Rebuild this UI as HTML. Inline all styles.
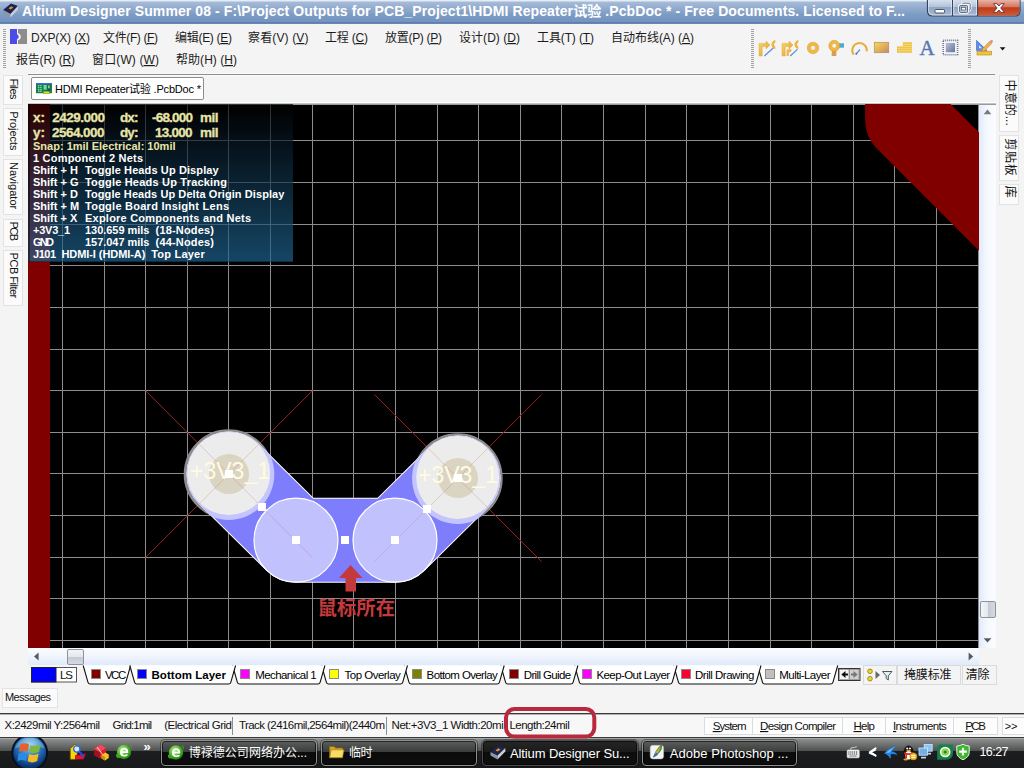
<!DOCTYPE html>
<html><head><meta charset="utf-8"><title>Altium Designer Summer 08</title>
<style>
*{box-sizing:border-box;margin:0;padding:0}
html,body{width:1024px;height:768px;overflow:hidden;background:#f4f4f4}
body{font-family:"Liberation Sans","Noto Sans CJK SC",sans-serif;font-size:11px;color:#1a1a1a;position:relative}
.abs{position:absolute}
#title{left:0;top:0;width:1024px;height:24px;background:linear-gradient(#e4ecf6 0,#e4ecf6 1px,#a6bbd8 2px,#8fa9cd 9px,#7b9ac4 15px,#7494c0 22px,#46689f 23px,#8aa3c8 24px)}
#canvas{left:28px;top:104px;width:951px;height:544px;background:#000;overflow:hidden}
#hud{left:0;top:0;width:265px;height:158px;box-shadow:inset 2px 0 0 rgba(0,0,0,.4),inset 0 -1px 0 rgba(0,0,0,.35);background:linear-gradient(rgba(0,0,0,.66),rgba(14,46,68,.67) 45%,rgba(32,103,150,.68))}
.ptab{background:#fbfbfb;border:1px solid #e3e3e3}
#labels{left:0;top:0;pointer-events:none}
#labels text{font-family:"Liberation Sans","Noto Sans CJK SC",sans-serif;white-space:pre}
.sb{background:#fdfdfd;border:1px solid #dcdcdc;top:717px;height:18px}
</style></head><body>
<div id="title" class="abs"></div>
<div class="abs" style="left:28px;top:73px;width:967px;height:3px;background:#fafafa"></div><div class="abs" style="left:28px;top:74px;width:967px;height:1px;background:#8e8e8e"></div>
<div class="abs" style="left:28px;top:102px;width:968px;height:1px;background:#fff"></div><div class="abs" style="left:28px;top:103px;width:968px;height:1px;background:#c4c4c4"></div>

<!-- left panel tabs -->
<div class="abs ptab" style="left:3px;top:75px;width:20px;height:30px"></div>
<div class="abs ptab" style="left:3px;top:108px;width:20px;height:48px"></div>
<div class="abs ptab" style="left:3px;top:159px;width:20px;height:56px"></div>
<div class="abs ptab" style="left:3px;top:219px;width:20px;height:28px"></div>
<div class="abs ptab" style="left:3px;top:250px;width:20px;height:56px"></div>
<!-- right panel tabs -->
<div class="abs ptab" style="left:999px;top:75px;width:20px;height:57px"></div>
<div class="abs ptab" style="left:999px;top:135px;width:20px;height:46px"></div>
<div class="abs ptab" style="left:999px;top:184px;width:20px;height:21px"></div>

<!-- document tab -->
<div class="abs" style="left:31px;top:77px;width:173px;height:23px;background:#fff;border:1px solid #8c8c8c;border-radius:2px"></div>

<div id="canvas" class="abs">
<svg width="951" height="544" viewBox="28 104 951 544" style="position:absolute;left:0;top:0" shape-rendering="crispEdges">
<g fill="#908b8f"><rect x="62" y="104" width="1" height="544"/><rect x="104" y="104" width="1" height="544"/><rect x="145" y="104" width="1" height="544"/><rect x="187" y="104" width="1" height="544"/><rect x="228" y="104" width="1" height="544"/><rect x="270" y="104" width="1" height="544"/><rect x="312" y="104" width="1" height="544"/><rect x="353" y="104" width="1" height="544"/><rect x="395" y="104" width="1" height="544"/><rect x="437" y="104" width="1" height="544"/><rect x="478" y="104" width="1" height="544"/><rect x="520" y="104" width="1" height="544"/><rect x="561" y="104" width="1" height="544"/><rect x="603" y="104" width="1" height="544"/><rect x="645" y="104" width="1" height="544"/><rect x="686" y="104" width="1" height="544"/><rect x="728" y="104" width="1" height="544"/><rect x="770" y="104" width="1" height="544"/><rect x="811" y="104" width="1" height="544"/><rect x="853" y="104" width="1" height="544"/><rect x="894" y="104" width="1" height="544"/><rect x="936" y="104" width="1" height="544"/><rect x="978" y="104" width="1" height="544"/><rect x="50" y="140" width="929" height="1"/><rect x="50" y="182" width="929" height="1"/><rect x="50" y="224" width="929" height="1"/><rect x="50" y="265" width="929" height="1"/><rect x="50" y="307" width="929" height="1"/><rect x="50" y="349" width="929" height="1"/><rect x="50" y="390" width="929" height="1"/><rect x="50" y="432" width="929" height="1"/><rect x="50" y="473" width="929" height="1"/><rect x="50" y="515" width="929" height="1"/><rect x="50" y="557" width="929" height="1"/><rect x="50" y="598" width="929" height="1"/><rect x="50" y="640" width="929" height="1"/></g>
<rect x="50" y="104" width="929" height="1" fill="#9a9a9a"/>
<rect x="28" y="104" width="22" height="544" fill="#800000"/>

<g shape-rendering="geometricPrecision">
<path d="M906.9 40V119.5L1106.9 319.5" stroke="#800000" stroke-width="83.7" stroke-linejoin="round" fill="none"/>
<path d="M145.5 390.6L312.5 557.6M312.5 390.6L145.5 557.6" stroke="#7c0000" stroke-width="1" fill="none" opacity="1"/><path d="M374.5 394.6L541.5 561.6M541.5 394.6L374.5 561.6" stroke="#7c0000" stroke-width="1" fill="none" opacity="1"/>
<circle cx="228.7" cy="474.3" r="43" fill="none" stroke="#8c8c8c" stroke-width="4"/>
<circle cx="457.7" cy="478.3" r="43" fill="none" stroke="#8c8c8c" stroke-width="4"/>
<path d="M229 474.1L296 540.2L395 540.2L458 478.1" stroke="#fff" stroke-width="85.0" stroke-linecap="round" stroke-linejoin="round" fill="none"/>
<path d="M229 474.1L296 540.2L395 540.2L458 478.1" stroke="#7e7efc" stroke-width="83.0" stroke-linecap="round" stroke-linejoin="round" fill="none"/>
<mask id="tm" maskUnits="userSpaceOnUse" x="100" y="380" width="500" height="260"><path d="M229 474.1L296 540.2L395 540.2L458 478.1" stroke="#fff" stroke-width="85.0" stroke-linecap="round" stroke-linejoin="round" fill="none"/></mask>
<g mask="url(#tm)"><circle cx="228.7" cy="474.3" r="45.6" fill="#c4c4ff"/>
<circle cx="457.7" cy="478.3" r="45.6" fill="#c4c4ff"/></g>
<circle cx="296" cy="540.2" r="42" fill="#c1c1fe" stroke="#fff" stroke-width="1.2"/>
<circle cx="395" cy="540.2" r="42" fill="#c1c1fe" stroke="#fff" stroke-width="1.2"/>
<circle cx="228.7" cy="473.40000000000003" r="41.5" fill="#ececec"/>
<circle cx="457.7" cy="477.40000000000003" r="41.5" fill="#ececec"/>
<circle cx="229" cy="474.1" r="20" fill="#dad4c2"/>
<circle cx="458" cy="478.1" r="20" fill="#dad4c2"/>
<path d="M145.5 390.6L312.5 557.6M312.5 390.6L145.5 557.6" stroke="#d07070" stroke-width="1" fill="none" opacity="0.3"/><path d="M374.5 394.6L541.5 561.6M541.5 394.6L374.5 561.6" stroke="#d07070" stroke-width="1" fill="none" opacity="0.3"/>
<text x="190" y="479.3" font-size="23.2" textLength="80" lengthAdjust="spacingAndGlyphs" fill="#fffbe2" style="font-family:'Liberation Sans',sans-serif">+3V3_1</text>
<text x="418" y="483.3" font-size="23.2" textLength="80" lengthAdjust="spacingAndGlyphs" fill="#fffbe2" style="font-family:'Liberation Sans',sans-serif">+3V3_1</text>
<rect x="225" y="470" width="8" height="8" fill="#fff" shape-rendering="crispEdges"/><rect x="454" y="474" width="8" height="8" fill="#fff" shape-rendering="crispEdges"/><rect x="292" y="536" width="8" height="8" fill="#fff" shape-rendering="crispEdges"/><rect x="391" y="536" width="8" height="8" fill="#fff" shape-rendering="crispEdges"/><rect x="341" y="536" width="8" height="8" fill="#fff" shape-rendering="crispEdges"/><rect x="258" y="503" width="8" height="8" fill="#fff" shape-rendering="crispEdges"/><rect x="423" y="505" width="8" height="8" fill="#fff" shape-rendering="crispEdges"/>
<path d="M350.5 565L362.5 578L356 578L356 591.5L345.5 591.5L345.5 578L339 578Z" fill="#c23a3c"/>
<text x="317.5" y="614.5" font-size="19.3" font-weight="bold" fill="#c43a3c" textLength="77.5" lengthAdjust="spacing" style="font-family:'Noto Sans CJK SC','Liberation Sans',sans-serif">鼠标所在</text>
</g>

</svg>
<div id="hud" class="abs"></div>
</div>

<!-- scrollbars -->
<div class="abs" style="left:979px;top:104px;width:17px;height:544px;background:linear-gradient(90deg,#dfeafb,#f4f8fe 45%,#fbfcff)"></div>
<div class="abs" style="left:28px;top:648px;width:951px;height:17px;background:linear-gradient(#fbfcff,#f0f5fd 50%,#dfeafb)"></div>
<div class="abs" style="left:980px;top:601px;width:16px;height:17px;border:1px solid #8e949c;border-radius:2px;background:linear-gradient(90deg,#f4f5f7,#e4e7ec 48%,#c4cad4 52%,#d6dae2)"></div>
<div class="abs" style="left:67px;top:649px;width:17px;height:16px;border:1px solid #8e949c;border-radius:2px;background:linear-gradient(#f4f5f7,#e4e7ec 48%,#c4cad4 52%,#d6dae2)"></div>

<div class="abs" style="left:979px;top:104px;width:17px;height:1px;background:#9a9a9a"></div>
<svg class="abs" style="left:0;top:660px" width="1024" height="30" viewBox="0 660 1024 30">
<path d="M757.7 665.5L762.5 682.3Q763.0 684 764.7 684L830.7 684Q832.4000000000001 684 832.9000000000001 682.3L837.7 665.5" fill="#fff" stroke="#111" stroke-width="1.1"/>
<rect x="765.5" y="669.5" width="9" height="9" fill="#c0c0c0" stroke="#8a8a8a" stroke-width="1"/>
<path d="M673.7 665.5L678.5 682.3Q679.0 684 680.7 684L754 684Q755.7 684 756.2 682.3L761 665.5" fill="#fff" stroke="#111" stroke-width="1.1"/>
<rect x="681.5" y="669.5" width="9" height="9" fill="#ff0030" stroke="#8a8a8a" stroke-width="1"/>
<path d="M574.6 665.5L579.4 682.3Q579.9 684 581.6 684L670 684Q671.7 684 672.2 682.3L677 665.5" fill="#fff" stroke="#111" stroke-width="1.1"/>
<rect x="582.5" y="669.5" width="9" height="9" fill="#ff00ff" stroke="#8a8a8a" stroke-width="1"/>
<path d="M500.8 665.5L505.6 682.3Q506.1 684 507.8 684L570.9 684Q572.6 684 573.1 682.3L577.9 665.5" fill="#fff" stroke="#111" stroke-width="1.1"/>
<rect x="509.5" y="669.5" width="9" height="9" fill="#800000" stroke="#8a8a8a" stroke-width="1"/>
<path d="M404.2 665.5L409.0 682.3Q409.5 684 411.2 684L497.2 684Q498.9 684 499.4 682.3L504.2 665.5" fill="#fff" stroke="#111" stroke-width="1.1"/>
<rect x="412.5" y="669.5" width="9" height="9" fill="#808000" stroke="#8a8a8a" stroke-width="1"/>
<path d="M321.6 665.5L326.40000000000003 682.3Q326.90000000000003 684 328.6 684L400.5 684Q402.2 684 402.7 682.3L407.5 665.5" fill="#fff" stroke="#111" stroke-width="1.1"/>
<rect x="329.5" y="669.5" width="9" height="9" fill="#ffff00" stroke="#8a8a8a" stroke-width="1"/>
<path d="M232.6 665.5L237.4 682.3Q237.9 684 239.6 684L317.9 684Q319.59999999999997 684 320.09999999999997 682.3L324.9 665.5" fill="#fff" stroke="#111" stroke-width="1.1"/>
<rect x="240.5" y="669.5" width="9" height="9" fill="#ff00ff" stroke="#8a8a8a" stroke-width="1"/>
<path d="M83.2 665.5L88.0 682.3Q88.5 684 90.2 684L123.6 684Q125.3 684 125.8 682.3L130.6 665.5" fill="#fff" stroke="#111" stroke-width="1.1"/>
<rect x="91.5" y="669.5" width="9" height="9" fill="#800000" stroke="#8a8a8a" stroke-width="1"/>
<path d="M129.8 665.5L134.60000000000002 682.3Q135.10000000000002 684 136.8 684L228.6 684Q230.29999999999998 684 230.79999999999998 682.3L235.6 665.5" fill="#fff" stroke="#111" stroke-width="1.1"/>
<rect x="137.5" y="669.5" width="9" height="9" fill="#0000ff" stroke="#8a8a8a" stroke-width="1"/>
<rect x="31.5" y="667.5" width="45" height="14.5" fill="#fff" stroke="#555" stroke-width="1"/><rect x="31.5" y="667.5" width="24.5" height="14.5" fill="#0000ff" stroke="#222" stroke-width="1"/>
<rect x="838.5" y="668.5" width="21.5" height="12" fill="#e8e8e8" stroke="#333" stroke-width="1"/><rect x="839.5" y="669.5" width="9.5" height="10" fill="#f4f4f4" stroke="#777" stroke-width=".6"/><rect x="849.5" y="669.5" width="9.5" height="10" fill="#cfcfcf" stroke="#777" stroke-width=".6"/>
<path d="M841.3 674.5L845.5 671L845.5 673.5L848 673.5L848 675.5L845.5 675.5L845.5 678Z" fill="#111"/><path d="M857.7 674.5L853.5 671L853.5 673.5L851 673.5L851 675.5L853.5 675.5L853.5 678Z" fill="#777"/>
<rect x="863.5" y="665.5" width="33" height="19" fill="#f4f4f4" stroke="#dadada"/><rect x="897.5" y="665.5" width="63" height="19" fill="#f4f4f4" stroke="#dadada"/><rect x="962.5" y="665.5" width="34" height="19" fill="#f4f4f4" stroke="#dadada"/>
<circle cx="870" cy="671.3" r="2.3" fill="#f2d52a" stroke="#8a7a10" stroke-width=".8"/><circle cx="870" cy="678.7" r="2.3" fill="#f2d52a" stroke="#8a7a10" stroke-width=".8"/><path d="M875.5 671L880 675L875.5 679Z" fill="#666"/><path d="M882.5 671.5L892 671.5L888.3 675.8L888.3 680L886.2 678.5L886.2 675.8Z" fill="#e8eef2" stroke="#4a5a60" stroke-width="1"/>
</svg>

<!-- messages -->
<div class="abs ptab" style="left:2px;top:688px;width:56px;height:20px"></div>

<!-- status bar -->
<div class="abs" style="left:0;top:713px;width:1024px;height:24px;background:#f7f7f7;border-top:1px solid #3a3a3a"></div>
<div class="abs" style="left:0;top:714px;width:1024px;height:1px;background:#b0b0b0"></div>
<div class="abs" style="left:232px;top:717px;width:1px;height:18px;background:#8e8e8e"></div>
<div class="abs" style="left:386px;top:717px;width:1px;height:18px;background:#8e8e8e"></div>
<div class="abs sb" style="left:704px;width:49px"></div>
<div class="abs sb" style="left:752px;width:91px"></div>
<div class="abs sb" style="left:842px;width:44px"></div>
<div class="abs sb" style="left:885px;width:69px"></div>
<div class="abs sb" style="left:953px;width:45px"></div>
<div class="abs sb" style="left:1002px;width:24px"></div>

<div class="abs" style="left:0;top:737px;width:1024px;height:31px;background:linear-gradient(#3a3a3a 0,#3a3a3a 1px,#a6a8a8 1px,#a6a8a8 2px,#8c8e8e 2px,#4e5050 14px,#1c1e1f 14px,#17191a 31px)"></div>
<div class="abs" style="left:161px;top:740px;width:156px;height:26px;border:1px solid #8e9090;border-radius:4px;background:linear-gradient(#5c5e5e 0,#3a3c3c 11px,#0b0b0b 11px,#0d0d0d);box-shadow:inset 0 0 0 1px rgba(0,0,0,.6),0 0 0 1px rgba(0,0,0,.35)"></div>
<div class="abs" style="left:321px;top:740px;width:156px;height:26px;border:1px solid #8e9090;border-radius:4px;background:linear-gradient(#5c5e5e 0,#3a3c3c 11px,#0b0b0b 11px,#0d0d0d);box-shadow:inset 0 0 0 1px rgba(0,0,0,.6),0 0 0 1px rgba(0,0,0,.35)"></div>
<div class="abs" style="left:482px;top:740px;width:156px;height:26px;border:1px solid #4e4e4e;border-radius:4px;background:linear-gradient(#262626 0,#1a1a1a 11px,#0c0c0c 11px,#101010);box-shadow:inset 0 0 0 1px rgba(0,0,0,.6),0 0 0 1px rgba(0,0,0,.35)"></div>
<div class="abs" style="left:642px;top:740px;width:155px;height:26px;border:1px solid #8e9090;border-radius:4px;background:linear-gradient(#5c5e5e 0,#3a3c3c 11px,#0b0b0b 11px,#0d0d0d);box-shadow:inset 0 0 0 1px rgba(0,0,0,.6),0 0 0 1px rgba(0,0,0,.35)"></div>

<svg id="labels" class="abs" width="1024" height="768" viewBox="0 0 1024 768">
<defs>
<linearGradient id="gO" x1="0" y1="0" x2="1" y2="1"><stop offset="0" stop-color="#fbd962"/><stop offset="1" stop-color="#e09a34"/></linearGradient>
<linearGradient id="gF" x1="0" y1="0" x2="1" y2="1"><stop offset="0" stop-color="#fbdc4e"/><stop offset="1" stop-color="#c48a62"/></linearGradient>
<linearGradient id="gC" x1="0" y1="0" x2="1" y2="1"><stop offset="0" stop-color="#b8c0dc"/><stop offset="1" stop-color="#66749a"/></linearGradient>
<linearGradient id="gMin" x1="0" y1="0" x2="0" y2="1"><stop offset="0" stop-color="#dbe4f0"/><stop offset=".45" stop-color="#b3c3da"/><stop offset=".5" stop-color="#8ea5c6"/><stop offset="1" stop-color="#a9bcd6"/></linearGradient>
<linearGradient id="gCl" x1="0" y1="0" x2="0" y2="1"><stop offset="0" stop-color="#e7b3a6"/><stop offset=".45" stop-color="#d4755d"/><stop offset=".5" stop-color="#c0391c"/><stop offset="1" stop-color="#cf5a30"/></linearGradient>
<radialGradient id="gOrb" cx=".5" cy=".3" r=".75"><stop offset="0" stop-color="#8fd0f4"/><stop offset=".45" stop-color="#2a78c0"/><stop offset=".8" stop-color="#0d3a78"/><stop offset="1" stop-color="#0a2450"/></radialGradient>
<radialGradient id="gE" cx=".4" cy=".35" r=".7"><stop offset="0" stop-color="#b8f08a"/><stop offset=".6" stop-color="#48b428"/><stop offset="1" stop-color="#1e7a10"/></radialGradient>
</defs>
<path d="M4.5 29V68" stroke="#a2a2a2" stroke-width="3" stroke-dasharray="1 1" fill="none" shape-rendering="crispEdges"/>
<path d="M752.5 29V68" stroke="#a2a2a2" stroke-width="3" stroke-dasharray="1 1" fill="none" shape-rendering="crispEdges"/>
<path d="M969.5 29V68" stroke="#a2a2a2" stroke-width="3" stroke-dasharray="1 1" fill="none" shape-rendering="crispEdges"/>
<path d="M3 10L11 3.5L18 6L10.5 14Z" fill="#1b2550"/><path d="M3 10L10.5 14L10.5 17.5L3 13.5Z" fill="#8e96a4"/><path d="M10.5 14L18 6L18 9.5L10.5 17.5Z" fill="#c9ced6"/><path d="M8.5 8.3L11.3 6.2L13.4 7.4L10.6 9.6Z" fill="#e89030"/>
<path d="M10 29H17V34.3A2.6 2.6 0 0 1 17 39.2V44H10Z" fill="#4b4be9"/><path d="M18 29H27V44H18V40.2A3.6 3.6 0 0 0 18 33.2Z" fill="#8d8d8d"/>
<clipPath id="cpA"><rect x="755" y="38" width="20.3" height="20"/></clipPath><clipPath id="cpB"><rect x="778" y="38" width="20.3" height="20"/></clipPath>
<path d="M759 56V43.4H766V41L770 45L766 49V46.6H762.2V56Z" fill="url(#gO)" stroke="#dfa030" stroke-width=".4"/><circle cx="776" cy="44.6" r="3.3" fill="none" stroke="#eeb440" stroke-width="2.5" clip-path="url(#cpA)"/><path d="M764.4 56L773.2 48" stroke="#5a8ae6" stroke-width="1.2"/>
<path d="M782 56V43.4H789V41L793 45L789 49V46.6H785.2V56Z" fill="url(#gO)" stroke="#dfa030" stroke-width=".4"/><path d="M786.6 56V49.4H789.4V48L792 50.5L789.4 53V51.6H788.8V56Z" fill="#eeb440"/><circle cx="799" cy="44.6" r="3.3" fill="none" stroke="#eeb440" stroke-width="2.5" clip-path="url(#cpB)"/><path d="M790.2 56L797.4 49.4" stroke="#5a8ae6" stroke-width="1.2"/>
<circle cx="813" cy="47.9" r="3.9" fill="none" stroke="#efb843" stroke-width="3.6"/><circle cx="813" cy="47.9" r="5.8" fill="none" stroke="#d8962a" stroke-width=".5"/>
<rect x="838" y="43.3" width="6" height="4.4" fill="#49acd2"/><rect x="831.7" y="49" width="4.6" height="7" fill="#dc9a56"/><circle cx="834.2" cy="45.8" r="3.7" fill="none" stroke="#efb843" stroke-width="3.5"/><circle cx="834.2" cy="45.8" r="5.5" fill="none" stroke="#d8962a" stroke-width=".5"/>
<path d="M853.6 54.6A7.3 7.3 0 1 1 866.8 51.4" fill="none" stroke="#e7ae48" stroke-width="2"/><path d="M856.4 53.6L860 49.6" stroke="#4a7ae0" stroke-width="1.2"/><circle cx="856.3" cy="53.7" r="1" fill="#3a6ad8"/>
<rect x="874.3" y="42.3" width="14.4" height="10.4" fill="url(#gF)" stroke="#b08a78" stroke-width=".7"/>
<path d="M897 46.6H903V42.2H912V52.8H897Z" fill="#e9b23c"/><path d="M897 48.7H912M897 50.8H912M903 44.4H912M903 46.6H912M899 46.6V52.8M901 46.6V52.8M903 42.2V52.8M905 42.2V52.8M907 42.2V52.8M909 42.2V52.8M911 42.2V52.8" stroke="#f8e27a" stroke-width=".7" fill="none"/>
<text x="919.6" y="55.3" font-size="21" fill="#5877b6" stroke="#5877b6" stroke-width=".4" style="font-family:'Liberation Serif',serif">A</text>
<rect x="943.2" y="40.4" width="14.4" height="14.4" fill="none" stroke="#6a7894" stroke-width="1.6" stroke-dasharray="1 1"/><rect x="944.8" y="42" width="11.2" height="11.2" fill="#f3f3f3"/><rect x="945.8" y="43" width="9.2" height="9.2" fill="url(#gC)"/>
<path d="M976.5 40.3V50.6H987Z" fill="#5b8ae8" stroke="#3b66c8" stroke-width=".6"/><path d="M979 45.2V48.3H982.2Z" fill="#dfe8fb"/><rect x="977" y="51.2" width="14.6" height="3.8" fill="#f0c53c" stroke="#b88a1c" stroke-width=".6"/><path d="M982.3 49L989.3 41.6L991.6 43.7L984.5 51.1L981.6 51.8Z" fill="#efb046" stroke="#a87a30" stroke-width=".4"/><path d="M989.3 41.6L990.7 40.2Q992.2 39.6 993.1 41.1L991.6 43.7Z" fill="#e58a8a"/><path d="M999.8 47.3H1005.4L1002.6 50.4Z" fill="#111"/>
<rect x="36.3" y="83.3" width="15.4" height="9.6" fill="#0e8250" stroke="#0a5a3a" stroke-width=".6"/><rect x="36.3" y="83" width="15.4" height="1.2" fill="#3a6ae8"/><path d="M38 85.6H42M38 87.6H42M38 89.6H42M38 91.4H42" stroke="#8fe0a8" stroke-width="1.1" stroke-dasharray="1.4 .8"/><rect x="43.6" y="85" width="3" height="4.6" fill="#7fd6a0"/><rect x="47.6" y="84.8" width="2.6" height="6" fill="#0a5a3a"/><rect x="48.2" y="85.4" width="1.4" height="3" fill="#a8e8c0"/><rect x="43.4" y="91.4" width="6" height="2.4" fill="#dfe02a" stroke="#7a8a10" stroke-width=".4"/>
<path d="M927.5 -1V11Q927.5 16 932.5 16H1015Q1020 16 1020 11V-1Z" fill="url(#gMin)" stroke="#39455c" stroke-width="1.2"/><path d="M978 0H1019.4V11Q1019.4 15.4 1015 15.4H978Z" fill="url(#gCl)"/><path d="M952.5 0V16M977.6 0V16" stroke="#39455c" stroke-width="1.1"/><path d="M928.6 0V11Q928.6 15 932.6 15H951.4V0M953.7 0V15H976.5V0" fill="none" stroke="rgba(255,255,255,.55)" stroke-width="1"/>
<rect x="935" y="9.5" width="9.5" height="3.5" rx=".8" fill="#fff" stroke="#4a5468" stroke-width="1"/>
<rect x="962.6" y="3.2" width="7.6" height="7" rx="1" fill="none" stroke="#fff" stroke-width="2.6"/><rect x="962.6" y="3.2" width="7.6" height="7" rx="1" fill="none" stroke="#4a5468" stroke-width=".9"/><rect x="959.6" y="5.6" width="8" height="7" rx="1" fill="#c3d0e2" stroke="#fff" stroke-width="2.8"/><rect x="959.6" y="5.6" width="8" height="7" rx="1" fill="#b8c6dc" stroke="#4a5468" stroke-width=".9"/><rect x="961.6" y="7.6" width="4" height="2.4" fill="#fff" stroke="#4a5468" stroke-width=".7"/>
<path d="M993.5 3.7L996.9 3.7L998.9 6L1000.9 3.7L1004.3 3.7L1000.7 8L1004.5 12.4L1001 12.4L998.9 10L996.8 12.4L993.3 12.4L997.1 8Z" fill="#fff" stroke="#5c3030" stroke-width=".9" stroke-linejoin="round"/>
<path d="M983.6 114.3L987.5 109.6L991.4 114.3Z" fill="#7a7a7a"/><path d="M983.6 638.2L991.4 638.2L987.5 642.6Z" fill="#5a5a5a"/><path d="M38.6 652.6L38.6 660.4L34 656.5Z" fill="#5a5a5a"/><path d="M968.6 652.6L968.6 660.4L973.2 656.5Z" fill="#5a5a5a"/>
<rect x="506" y="709" width="88.3" height="27.6" rx="8.5" fill="none" stroke="#b8293d" stroke-width="4"/>
<clipPath id="cpO"><rect x="0" y="737.6" width="60" height="31"/></clipPath><g clip-path="url(#cpO)"><circle cx="29.7" cy="752.6" r="18.4" fill="#06101f"/><circle cx="29.7" cy="752.6" r="16.4" fill="url(#gOrb)"/><path d="M14.8 748.4A15.6 15.6 0 0 1 44.6 748.4Q30 742.5 14.8 748.4Z" fill="rgba(255,255,255,.25)"/></g>
<path d="M20.3 744.6Q24.6 742.2 29 744.4L27.7 751.6Q23.6 749.6 19 752Z" fill="#e8602a"/><path d="M30.6 745Q35 747.4 40.6 744.4L39 751.8Q34.2 754.4 29.3 752Z" fill="#7cb83c"/><path d="M18.6 753.8Q23.2 751.4 27.4 753.4L26 761Q21.8 758.8 17.4 761.2Z" fill="#2a8ce0"/><path d="M29 753.9Q33.8 756.2 38.6 753.6L37.2 761Q32.6 763.6 27.6 761.3Z" fill="#f6b928"/>
<path d="M70.2 759.4V748.5L75 744L77.2 746V759.4Z" fill="#f7d708" stroke="#6a4a00" stroke-width=".8"/><path d="M75.5 755.5L86 753.6L83.6 759.6H75.5Z" fill="#e0142c" stroke="#7a0010" stroke-width=".6"/><path d="M78.4 750.8L83.4 756.2" stroke="#2848e0" stroke-width="2.2" stroke-linecap="round"/><circle cx="76.8" cy="749" r="3.1" fill="#cfeeff" stroke="#3a66e0" stroke-width="1.3"/>
<path d="M94 749L100.5 744.6L106 748L106 754.6L100 758.6L94 755Z" fill="#d02030"/><path d="M94 749L100 752L100 758.6L94 755Z" fill="#a01020"/><path d="M94 749L100.5 744.6L106 748L100 752Z" fill="#f04a58"/><path d="M97 747L103 755" stroke="#fff" stroke-width="1" opacity=".7"/><path d="M101.6 755L105.4 752.4L108.8 754.4L108.8 758L105 760.4L101.6 758.4Z" fill="#f5c020"/><path d="M101.6 755L105 757L105 760.4L101.6 758.4Z" fill="#c88a10"/>
<circle cx="124" cy="752" r="7.2" fill="url(#gE)"/><path d="M116.0 754.5Q115.2 759.2 122 757.8000000000001Q118.3 757.6 117.39999999999999 753.5Z" fill="#3aa420"/><path d="M128.7 745.5999999999999Q132.39999999999998 744.0 131.79999999999998 750Q131.0 746.1999999999999 128.7 745.5999999999999Z" fill="#3aa420"/><path d="M120.1 752.9H128.3Q128.3 747.8 124.2 747.8Q120 747.8 120 752.3Q120 756.6 124.4 756.6Q127.2 756.6 128.1 754.4H125.6Q125.1 755 124.3 755Q122.4 755 122.3 752.9ZM122.4 751.3Q122.7 749.4 124.2 749.4Q125.8 749.4 126 751.3Z" fill="#fff" fill-rule="evenodd"/>
<circle cx="176" cy="752.5" r="7.2" fill="url(#gE)"/><path d="M168.0 755.0Q167.20000000000002 759.7 174 758.3000000000001Q170.3 758.1 169.4 754.0Z" fill="#3aa420"/><path d="M180.7 746.0999999999999Q184.39999999999998 744.5 183.79999999999998 750.5Q183.0 746.6999999999999 180.7 746.0999999999999Z" fill="#3aa420"/><path d="M172.1 753.4H180.3Q180.3 748.3 176.2 748.3Q172 748.3 172 752.8Q172 757.1 176.4 757.1Q179.2 757.1 180.1 754.9H177.6Q177.1 755.5 176.3 755.5Q174.4 755.5 174.3 753.4ZM174.4 751.8Q174.7 749.9 176.2 749.9Q177.8 749.9 178 751.8Z" fill="#fff" fill-rule="evenodd"/>
<path d="M329.5 746.4H334.2L335.6 748H342.6V757.8H329.5Z" fill="#d8a420" stroke="#8a6408" stroke-width=".6"/><path d="M329.7 757.6L331.2 749.8H344L342.5 757.6Z" fill="#f8dc68" stroke="#9a7410" stroke-width=".6"/>
<path d="M490.5 752L498 745.6L505.3 748L497.5 755.6Z" fill="#1b2550"/><path d="M490.5 752L497.5 755.6L497.5 759.4L490.5 755.6Z" fill="#8e96a4"/><path d="M497.5 755.6L505.3 748L505.3 751.6L497.5 759.4Z" fill="#c9ced6"/><path d="M495.5 750.4L498.3 748.2L500.5 749.4L497.7 751.6Z" fill="#e89030"/>
<rect x="650.2" y="745.3" width="13.4" height="13.6" rx="2.4" fill="#f4f4f4" stroke="#b8b8b8" stroke-width=".5"/><path d="M653 757.6Q655 750 661.6 744.2Q663.6 748.6 658.6 753.6Q656 756.2 653 757.6Z" fill="#2f9a48"/><path d="M653 757.6Q655.5 751 660.5 746.4Q660.4 750.4 657 754Z" fill="#f0a020"/><path d="M653 757.6Q654 754.6 656.4 752.6L658 754.6Q656 756.6 653 757.6Z" fill="#2a6ad8"/><path d="M660.4 745.4L662 744L662.8 746.2Z" fill="#e03030"/>
<rect x="847.2" y="750" width="12" height="7.8" rx="1" fill="#e8e8e8" stroke="#fff" stroke-width=".6"/><path d="M848.4 752H858M848.4 754H858M849.6 756H857" stroke="#333" stroke-width="1" stroke-dasharray="1 .9"/><path d="M850.5 749.6Q850.5 747.4 852.5 747.6T854.5 747.4T856.8 746.8" stroke="#ddd" stroke-width=".9" fill="none"/>
<path d="M875.6 748.4L870.2 752L875.6 755.6" stroke="#fff" stroke-width="2" fill="none" stroke-linecap="round" stroke-linejoin="round"/>
<path d="M884.2 753.4Q888 748 897.8 745.2Q893.2 748.2 891.6 751.2Q895.6 751.6 897.4 755Q893.2 753.4 890.6 754.2Q891.4 756.8 890.2 759Q888.6 754.4 884.2 753.4Z" fill="#1f84e6"/><path d="M886 753Q889.6 749.2 895 746.8Q891.2 749.6 890 752.6Z" fill="#6fc0ff"/>
<ellipse cx="908.6" cy="752.6" rx="5.2" ry="7" fill="#151515"/><ellipse cx="908.6" cy="755.2" rx="3.4" ry="4.2" fill="#fff"/><circle cx="907.2" cy="748.6" r="1" fill="#fff"/><circle cx="910" cy="748.6" r="1" fill="#fff"/><ellipse cx="908.6" cy="750.6" rx="2.2" ry=".9" fill="#f0a010"/><path d="M904 752.2Q908.6 754.4 913.2 752.2L913 754Q908.6 756 904.2 754Z" fill="#e02020"/><path d="M905.4 754V758.4L907 758V754.6Z" fill="#e02020"/><ellipse cx="905.8" cy="759.6" rx="2.4" ry="1" fill="#f0a010"/><circle cx="913.4" cy="756.4" r="3.6" fill="#f6b820" stroke="#a06a00" stroke-width=".5"/><path d="M911.4 755.6H915.4M911.4 757.4H915.4" stroke="#fff" stroke-width="1"/>
<rect x="924.2" y="744.4" width="8" height="6.8" fill="#8ec4f4" stroke="#cfe6fb" stroke-width=".8"/><rect x="919" y="748" width="8.6" height="7.2" fill="#6fb0ee" stroke="#d8ecfc" stroke-width=".8"/><path d="M921 757.6H926M927 753.6H931" stroke="#c8d4e4" stroke-width="1.6"/>
<path d="M940.6 744.4H953V752.6Q953 759.8 945.8 759.8H937.2V747.8Q937.2 744.4 940.6 744.4Z" fill="#17804a"/><circle cx="945.2" cy="752" r="4.6" fill="#8fd84e" stroke="#fff" stroke-width="1.5"/><circle cx="945.2" cy="752" r="1.6" fill="#1d8a3a"/>
<path d="M963 744.2Q966 746 969.2 746V752.6Q969.2 757 963 759.8Q956.8 757 956.8 752.6V746Q960 746 963 744.2Z" fill="#3cb62c" stroke="#e8f4e8" stroke-width="1"/><path d="M963 747.8V755.4M959.2 751.6H966.8" stroke="#fff" stroke-width="2.2"/>
<text x="22" y="16" font-size="14" fill="#fff" font-weight="bold" textLength="883" lengthAdjust="spacing">Altium Designer Summer 08 - F:\Project Outputs for PCB_Project1\HDMI Repeater试验 .PcbDoc * - Free Documents. Licensed to F...</text>
<text x="31" y="42" font-size="12" fill="#1c1c1c" textLength="59" lengthAdjust="spacing">DXP(X) (<tspan text-decoration="underline">X</tspan>)</text>
<text x="103" y="42" font-size="12" fill="#1c1c1c" textLength="55" lengthAdjust="spacing">文件(F) (<tspan text-decoration="underline">F</tspan>)</text>
<text x="175" y="42" font-size="12" fill="#1c1c1c" textLength="57" lengthAdjust="spacing">编辑(E) (<tspan text-decoration="underline">E</tspan>)</text>
<text x="248" y="42" font-size="12" fill="#1c1c1c" textLength="60.5" lengthAdjust="spacing">察看(V) (<tspan text-decoration="underline">V</tspan>)</text>
<text x="325" y="42" font-size="12" fill="#1c1c1c" textLength="43" lengthAdjust="spacing">工程 (<tspan text-decoration="underline">C</tspan>)</text>
<text x="385" y="42" font-size="12" fill="#1c1c1c" textLength="57" lengthAdjust="spacing">放置(P) (<tspan text-decoration="underline">P</tspan>)</text>
<text x="459" y="42" font-size="12" fill="#1c1c1c" textLength="61" lengthAdjust="spacing">设计(D) (<tspan text-decoration="underline">D</tspan>)</text>
<text x="537" y="42" font-size="12" fill="#1c1c1c" textLength="57" lengthAdjust="spacing">工具(T) (<tspan text-decoration="underline">T</tspan>)</text>
<text x="611" y="42" font-size="12" fill="#1c1c1c" textLength="83" lengthAdjust="spacing">自动布线(A) (<tspan text-decoration="underline">A</tspan>)</text>
<text x="16" y="64" font-size="12" fill="#1c1c1c" textLength="59" lengthAdjust="spacing">报告(R) (<tspan text-decoration="underline">R</tspan>)</text>
<text x="92" y="64" font-size="12" fill="#1c1c1c" textLength="67" lengthAdjust="spacing">窗口(W) (<tspan text-decoration="underline">W</tspan>)</text>
<text x="176" y="64" font-size="12" fill="#1c1c1c" textLength="61" lengthAdjust="spacing">帮助(H) (<tspan text-decoration="underline">H</tspan>)</text>
<text x="55" y="93" font-size="11" fill="#000" textLength="146" lengthAdjust="spacing">HDMI Repeater试验 .PcbDoc *</text>
<text x="33" y="122" font-size="13.5" fill="#e9e5a9" font-weight="bold" textLength="12" lengthAdjust="spacing" stroke="#e9e5a9" stroke-width=".3">x:</text>
<text x="52.3" y="122" font-size="13.5" fill="#e9e5a9" font-weight="bold" textLength="52.7" lengthAdjust="spacing" stroke="#e9e5a9" stroke-width=".3">2429.000</text>
<text x="120" y="122" font-size="13.5" fill="#e9e5a9" font-weight="bold" textLength="18.4" lengthAdjust="spacing" stroke="#e9e5a9" stroke-width=".3">dx:</text>
<text x="152" y="122" font-size="13.5" fill="#e9e5a9" font-weight="bold" textLength="41" lengthAdjust="spacing" stroke="#e9e5a9" stroke-width=".3">-68.000</text>
<text x="200" y="122" font-size="13.5" fill="#e9e5a9" font-weight="bold" textLength="18.4" lengthAdjust="spacing" stroke="#e9e5a9" stroke-width=".3">mil</text>
<text x="33" y="136.6" font-size="13.5" fill="#e9e5a9" font-weight="bold" textLength="12" lengthAdjust="spacing" stroke="#e9e5a9" stroke-width=".3">y:</text>
<text x="52" y="136.6" font-size="13.5" fill="#e9e5a9" font-weight="bold" textLength="52.5" lengthAdjust="spacing" stroke="#e9e5a9" stroke-width=".3">2564.000</text>
<text x="120" y="136.6" font-size="13.5" fill="#e9e5a9" font-weight="bold" textLength="18.4" lengthAdjust="spacing" stroke="#e9e5a9" stroke-width=".3">dy:</text>
<text x="155" y="136.6" font-size="13.5" fill="#e9e5a9" font-weight="bold" textLength="37.5" lengthAdjust="spacing" stroke="#e9e5a9" stroke-width=".3">13.000</text>
<text x="200" y="136.6" font-size="13.5" fill="#e9e5a9" font-weight="bold" textLength="18.4" lengthAdjust="spacing" stroke="#e9e5a9" stroke-width=".3">mil</text>
<text x="33" y="150" font-size="11" fill="#e9e5a9" font-weight="bold" textLength="142.5" lengthAdjust="spacing">Snap: 1mil Electrical: 10mil</text>
<text x="33" y="162" font-size="11" fill="#fff" font-weight="bold" textLength="110" lengthAdjust="spacing">1 Component 2 Nets</text>
<text x="33" y="174" font-size="11" fill="#fff" font-weight="bold">Shift + H</text>
<text x="85" y="174" font-size="11" fill="#fff" font-weight="bold" textLength="133.7" lengthAdjust="spacing">Toggle Heads Up Display</text>
<text x="33" y="186" font-size="11" fill="#fff" font-weight="bold">Shift + G</text>
<text x="85" y="186" font-size="11" fill="#fff" font-weight="bold" textLength="142" lengthAdjust="spacing">Toggle Heads Up Tracking</text>
<text x="33" y="198" font-size="11" fill="#fff" font-weight="bold">Shift + D</text>
<text x="85" y="198" font-size="11" fill="#fff" font-weight="bold" textLength="199.4" lengthAdjust="spacing">Toggle Heads Up Delta Origin Display</text>
<text x="33" y="210" font-size="11" fill="#fff" font-weight="bold">Shift + M</text>
<text x="85" y="210" font-size="11" fill="#fff" font-weight="bold" textLength="144" lengthAdjust="spacing">Toggle Board Insight Lens</text>
<text x="33" y="222" font-size="11" fill="#fff" font-weight="bold">Shift + X</text>
<text x="85" y="222" font-size="11" fill="#fff" font-weight="bold" textLength="166" lengthAdjust="spacing">Explore Components and Nets</text>
<text x="33" y="234" font-size="11" fill="#fff" font-weight="bold" textLength="37" lengthAdjust="spacing">+3V3_1</text>
<text x="85" y="234" font-size="11" fill="#fff" font-weight="bold" textLength="64.4" lengthAdjust="spacing">130.659 mils</text>
<text x="155.6" y="234" font-size="11" fill="#fff" font-weight="bold" textLength="58.4" lengthAdjust="spacing">(18-Nodes)</text>
<text x="33" y="246" font-size="11" fill="#fff" font-weight="bold" textLength="21" lengthAdjust="spacing">GND</text>
<text x="85" y="246" font-size="11" fill="#fff" font-weight="bold" textLength="64.4" lengthAdjust="spacing">157.047 mils</text>
<text x="155.6" y="246" font-size="11" fill="#fff" font-weight="bold" textLength="58.4" lengthAdjust="spacing">(44-Nodes)</text>
<text x="33" y="258" font-size="11" fill="#fff" font-weight="bold" textLength="23" lengthAdjust="spacing">J101</text>
<text x="61.5" y="258" font-size="11" fill="#fff" font-weight="bold" textLength="83.8" lengthAdjust="spacing">HDMI-I (HDMI-A)</text>
<text x="151.2" y="258" font-size="11" fill="#fff" font-weight="bold" textLength="53.5" lengthAdjust="spacing">Top Layer</text>
<text x="4.5" y="728.5" font-size="11.5" fill="#111" textLength="95.5" lengthAdjust="spacing">X:2429mil Y:2564mil</text>
<text x="112.5" y="728.5" font-size="11.5" fill="#111" textLength="39.5" lengthAdjust="spacing">Grid:1mil</text>
<text x="164.3" y="728.5" font-size="11.5" fill="#111" textLength="67.7" lengthAdjust="spacing">(Electrical Grid</text>
<text x="239" y="728.5" font-size="11.5" fill="#111" textLength="146" lengthAdjust="spacing">Track (2416mil,2564mil)(2440m</text>
<text x="391.6" y="728.5" font-size="11.5" fill="#111" textLength="112.1" lengthAdjust="spacing">Net:+3V3_1 Width:20mi</text>
<text x="509.4" y="728.5" font-size="11.5" fill="#111" textLength="60.3" lengthAdjust="spacing">Length:24mil</text>
<text x="712.7" y="730" font-size="11.5" fill="#111" textLength="33.8" lengthAdjust="spacing"><tspan text-decoration="underline">S</tspan>ystem</text>
<text x="760" y="730" font-size="11.5" fill="#111" textLength="76" lengthAdjust="spacing"><tspan text-decoration="underline">D</tspan>esign Compiler</text>
<text x="853.5" y="730" font-size="11.5" fill="#111" textLength="21.5" lengthAdjust="spacing"><tspan text-decoration="underline">H</tspan>elp</text>
<text x="893" y="730" font-size="11.5" fill="#111" textLength="53.8" lengthAdjust="spacing"><tspan text-decoration="underline">I</tspan>nstruments</text>
<text x="965.2" y="730" font-size="11.5" fill="#111" textLength="20.6" lengthAdjust="spacing"><tspan text-decoration="underline">P</tspan>CB</text>
<text x="1004.8" y="730" font-size="11" fill="#111" textLength="12.6" lengthAdjust="spacing">&gt;&gt;</text>
<text x="5" y="701" font-size="11" fill="#111" textLength="46" lengthAdjust="spacing">Messages</text>
<text x="105" y="678.6" font-size="11.5" fill="#000" textLength="21.2" lengthAdjust="spacing">VCC</text>
<text x="151.5" y="678.6" font-size="11.5" fill="#000" font-weight="bold" textLength="74.5" lengthAdjust="spacing">Bottom Layer</text>
<text x="255.2" y="678.6" font-size="11.5" fill="#000" textLength="61.5" lengthAdjust="spacing">Mechanical 1</text>
<text x="344.5" y="678.6" font-size="11.5" fill="#000" textLength="56.3" lengthAdjust="spacing">Top Overlay</text>
<text x="426.6" y="678.6" font-size="11.5" fill="#000" textLength="71.2" lengthAdjust="spacing">Bottom Overlay</text>
<text x="523.7" y="678.6" font-size="11.5" fill="#000" textLength="47.5" lengthAdjust="spacing">Drill Guide</text>
<text x="596.4" y="678.6" font-size="11.5" fill="#000" textLength="73.8" lengthAdjust="spacing">Keep-Out Layer</text>
<text x="695" y="678.6" font-size="11.5" fill="#000" textLength="59.3" lengthAdjust="spacing">Drill Drawing</text>
<text x="779.3" y="678.6" font-size="11.5" fill="#000" textLength="51.2" lengthAdjust="spacing">Multi-Layer</text>
<text x="60" y="679" font-size="11.5" fill="#111" textLength="13" lengthAdjust="spacing">LS</text>
<text x="904" y="679.3" font-size="12" fill="#111" textLength="47.6" lengthAdjust="spacing">掩膜标准</text>
<text x="965.8" y="679.3" font-size="12" fill="#111" textLength="23.8" lengthAdjust="spacing">清除</text>
<text x="188.8" y="757" font-size="12" fill="#fff" textLength="118.2" lengthAdjust="spacing">博禄德公司网络办公...</text>
<text x="349" y="757" font-size="12" fill="#fff" textLength="23.5" lengthAdjust="spacing">临时</text>
<text x="510" y="757.5" font-size="13" fill="#fff" textLength="119.7" lengthAdjust="spacing">Altium Designer Su...</text>
<text x="669.7" y="757.5" font-size="13" fill="#fff" textLength="118.7" lengthAdjust="spacing">Adobe Photoshop ...</text>
<text x="979.4" y="756" font-size="12.5" fill="#fff" textLength="29.1" lengthAdjust="spacing">16:27</text>
<text x="143.5" y="751" font-size="13" fill="#fff" font-weight="bold">»</text>
<text x="868.5" y="756.5" font-size="13" fill="#fff" font-weight="bold">&lt;</text>
<text transform="translate(9.7 78.5) rotate(90)" font-size="11" fill="#111" textLength="21.1" lengthAdjust="spacing">Files</text>
<text transform="translate(9.7 111.2) rotate(90)" font-size="11" fill="#111" textLength="39.2" lengthAdjust="spacing">Projects</text>
<text transform="translate(9.7 162.0) rotate(90)" font-size="11" fill="#111" textLength="47.2" lengthAdjust="spacing">Navigator</text>
<text transform="translate(9.7 221.4) rotate(90)" font-size="11" fill="#111" textLength="19.7" lengthAdjust="spacing">PCB</text>
<text transform="translate(9.7 252.6) rotate(90)" font-size="11" fill="#111" textLength="45.7" lengthAdjust="spacing">PCB Filter</text>
<text transform="translate(1005.8 79.6) rotate(90)" font-size="12" fill="#111" textLength="46.2" lengthAdjust="spacing">中意的...</text>
<text transform="translate(1005.8 138.2) rotate(90)" font-size="12" fill="#111" textLength="37.6" lengthAdjust="spacing">剪贴板</text>
<text transform="translate(1005.8 185.8) rotate(90)" font-size="12" fill="#111" textLength="13.6" lengthAdjust="spacing">库</text>
</svg>
</body></html>
